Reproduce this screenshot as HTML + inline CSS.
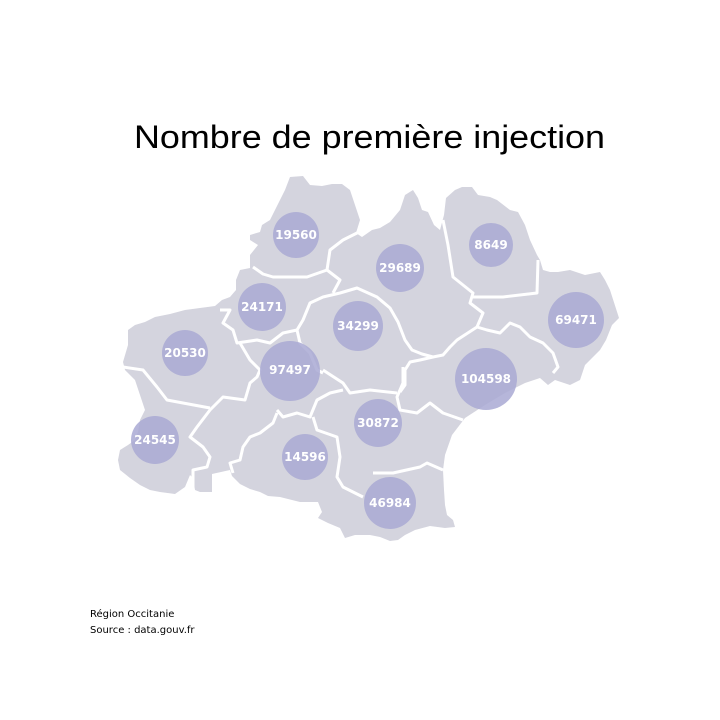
<!DOCTYPE html>
<html><head><meta charset="utf-8"><style>
html,body{margin:0;padding:0;background:#fff;width:720px;height:720px;overflow:hidden}
svg{display:block}
</style></head><body>
<svg width="720" height="720" viewBox="0 0 720 720" xmlns="http://www.w3.org/2000/svg">
<text x="134" y="148" font-family="Liberation Sans, sans-serif" font-size="32" fill="#000" textLength="471" lengthAdjust="spacingAndGlyphs">Nombre de première injection</text>
<path fill="#d4d4de" d="M290,177 L303,176 L310,185 L322,186 L332,184 L342,184 L350,190 L355,205 L360,220 L356,233 L362,237 L372,230 L380,228 L390,222 L400,210 L405,195 L413,190 L418,198 L422,210 L428,212 L434,225 L440,230 L444,215 L446,198 L455,190 L462,187 L472,187 L478,195 L490,197 L497,200 L510,210 L518,212 L525,225 L530,240 L537,255 L540,260 L543,270 L550,272 L558,272 L570,270 L585,275 L600,272 L605,280 L610,290 L619,318 L612,325 L606,340 L600,350 L592,358 L585,365 L580,380 L570,385 L555,380 L548,385 L540,378 L525,383 L505,393 L485,405 L465,418 L452,435 L445,455 L443,470 L444,490 L445,505 L447,515 L453,520 L455,527 L445,528 L430,526 L415,530 L405,535 L398,540 L390,541 L380,537 L370,535 L355,535 L345,538 L340,528 L328,523 L318,518 L322,512 L318,502 L300,502 L292,500 L280,497 L268,496 L260,492 L250,489 L240,484 L232,476 L230,470 L212,474 L212,492 L200,492 L195,490 L193,478 L190,475 L185,487 L175,494 L160,492 L150,490 L140,485 L130,478 L120,470 L118,460 L120,450 L128,445 L135,440 L138,432 L140,420 L145,410 L140,395 L135,380 L125,370 L123,362 L128,345 L128,330 L135,325 L145,322 L155,317 L170,314 L185,310 L200,308 L215,306 L222,300 L230,297 L236,290 L236,280 L240,270 L250,268 L250,255 L258,245 L250,240 L250,235 L260,232 L262,225 L270,220 L275,210 L280,200 L285,190 Z"/>
<g fill="none" stroke="#fff" stroke-width="3" stroke-linejoin="round">
<polyline points="253,267 263,274 273,277 290,277 307,277 327,270 340,280 333,293"/>
<polyline points="327,270 330,250 343,240 357,233 367,228"/>
<polyline points="443,220 448,245 453,277 473,293 470,303 483,313 477,327 457,340 450,347 443,355 433,357"/>
<polyline points="477,327 487,330 500,333 510,323 520,327 530,337 543,343 553,353 558,367 553,373"/>
<polyline points="473,297 503,297 537,293 538,260"/>
<polyline points="297,330 303,320 310,303 323,297 340,293 357,288 377,297 390,308 398,322 405,340 412,350 422,354 433,357 420,360 410,362 405,370 405,385 400,392"/>
<polyline points="403,367 403,383 397,397 400,410 417,413 430,403 443,413 463,420"/>
<polyline points="323,370 343,383 350,393 370,390 397,393"/>
<polyline points="277,410 283,417 297,413 310,417 317,400 330,393 343,390"/>
<polyline points="313,417 317,430 337,437 340,457 337,477 343,487 363,497"/>
<polyline points="277,413 273,423 260,433 250,437 243,447 240,460 230,463 233,473"/>
<polyline points="373,473 393,473 420,467 427,463 443,470"/>
<polyline points="240,343 250,360 260,370 257,377 250,383 245,400 223,397 210,410 197,427 190,437 203,447 210,457 207,467 193,470 193,490"/>
<polyline points="123,367 143,370 157,387 167,400 183,403 210,408"/>
<polyline points="220,310 230,310 223,323 233,330 237,343 257,340 270,343 283,333 297,330"/>
<polyline points="297,330 300,343 310,353 317,370 323,373"/>
</g>
<g fill="#a9a9d4" fill-opacity="0.85">
<circle cx="296" cy="235" r="23"/>
<circle cx="400" cy="268" r="24"/>
<circle cx="491" cy="245" r="22"/>
<circle cx="262" cy="307" r="24"/>
<circle cx="358" cy="326" r="25"/>
<circle cx="576" cy="320" r="28"/>
<circle cx="185" cy="353" r="23"/>
<circle cx="290" cy="371" r="30"/>
<circle cx="486" cy="379" r="31"/>
<circle cx="155" cy="440" r="24"/>
<circle cx="378" cy="423" r="24"/>
<circle cx="305" cy="457" r="23"/>
<circle cx="390" cy="503" r="26"/>
</g>
<g fill="#fff" font-family="DejaVu Sans, sans-serif" font-size="12" font-weight="bold" text-anchor="middle">
<text x="296" y="239">19560</text>
<text x="400" y="272">29689</text>
<text x="491" y="249">8649</text>
<text x="262" y="311">24171</text>
<text x="358" y="330">34299</text>
<text x="576" y="324">69471</text>
<text x="185" y="357">20530</text>
<text x="290" y="374">97497</text>
<text x="486" y="383">104598</text>
<text x="155" y="444">24545</text>
<text x="378" y="427">30872</text>
<text x="305" y="461">14596</text>
<text x="390" y="507">46984</text>
</g>
<text x="90" y="617" font-family="DejaVu Sans, sans-serif" font-size="10" fill="#000">Région Occitanie</text>
<text x="90" y="633" font-family="DejaVu Sans, sans-serif" font-size="10" fill="#000">Source : data.gouv.fr</text>
</svg>
</body></html>
